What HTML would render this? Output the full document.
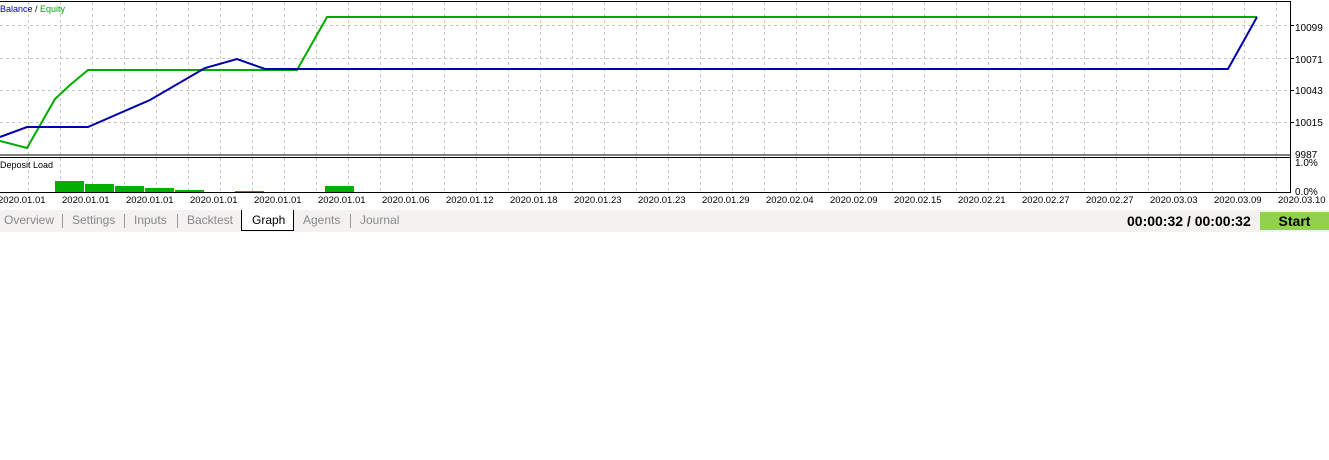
<!DOCTYPE html>
<html><head><style>
body{margin:0;width:1329px;height:460px;background:#fff;position:relative;overflow:hidden;font-family:"Liberation Sans",sans-serif}
.t{position:absolute;font-size:10px;color:#000;white-space:nowrap}
.tabs{position:absolute;left:0;top:210px;width:1329px;height:22px;background:#f4f1f1}
.tab{position:absolute;top:3px;font-size:12px;color:#888}
</style></head><body>
<svg width="1329" height="210" style="position:absolute;left:0;top:0">
<g stroke="#c8c8c8" stroke-dasharray="3,3" stroke-width="1">
<line x1="0" y1="25.5" x2="1290" y2="25.5"/><line x1="0" y1="58.5" x2="1290" y2="58.5"/>
<line x1="0" y1="90.5" x2="1290" y2="90.5"/><line x1="0" y1="122.5" x2="1290" y2="122.5"/>
</g>
<g id="v" stroke="#c8c8c8" stroke-dasharray="3,3" stroke-width="1"></g>
<line x1="0" y1="1.5" x2="1290" y2="1.5" stroke="#000"/>
<line x1="1290.5" y1="1" x2="1290.5" y2="193" stroke="#000"/>
<line x1="0" y1="155" x2="1290" y2="155" stroke="#000"/>
<line x1="0" y1="157.5" x2="1290" y2="157.5" stroke="#000"/>
<line x1="0" y1="192.5" x2="1290" y2="192.5" stroke="#000"/>
<polyline fill="none" stroke="#00aa00" stroke-width="2" points="0,141 27,148 55,99 70,85 88,70 297,70 327,17 1257,17"/>
<polyline fill="none" stroke="#0000aa" stroke-width="2" points="0,137 27,127 88,127 150,100 205,68 237,59 265,69 1228,69 1257,17"/>
<g fill="#00b000">
<rect x="55" y="181" width="29" height="11"/><rect x="85" y="184" width="29" height="8"/>
<rect x="115" y="186" width="29" height="6"/><rect x="145" y="188" width="29" height="4"/>
<rect x="175" y="190" width="29" height="2"/><rect x="235" y="191" width="29" height="1"/>
<rect x="325" y="186" width="29" height="6"/>
</g>
<g stroke="#000"><line x1="1290" y1="25.5" x2="1294" y2="25.5"/><line x1="1290" y1="58.5" x2="1294" y2="58.5"/><line x1="1290" y1="90.5" x2="1294" y2="90.5"/><line x1="1290" y1="122.5" x2="1294" y2="122.5"/></g>
</svg>
<script>
var g=document.getElementById('v'),s='';
for(var x=28;x<1290;x+=32){s+='<line x1="'+(x+.5)+'" y1="2" x2="'+(x+.5)+'" y2="192"/>'}
g.innerHTML=s;
</script>
<div class="t" style="left:0;top:4px;font-size:9px"><span style="color:#0000aa">Balance</span> / <span style="color:#00aa00">Equity</span></div>
<div class="t" style="left:0;top:160px;font-size:9px">Deposit Load</div>
<div class="t" style="left:1295px;top:23px">10099</div>
<div class="t" style="left:1295px;top:55px">10071</div>
<div class="t" style="left:1295px;top:86px">10043</div>
<div class="t" style="left:1295px;top:118px">10015</div>
<div class="t" style="left:1295px;top:150px">9987</div>
<div class="t" style="left:1295px;top:158px">1.0%</div>
<div class="t" style="left:1295px;top:187px">0.0%</div>
<div id="d"></div>
<script>
var L=["2020.01.01","2020.01.01","2020.01.01","2020.01.01","2020.01.01","2020.01.01","2020.01.06","2020.01.12","2020.01.18","2020.01.23","2020.01.23","2020.01.29","2020.02.04","2020.02.09","2020.02.15","2020.02.21","2020.02.27","2020.02.27","2020.03.03","2020.03.09","2020.03.10"],h='';
for(var i=0;i<L.length;i++){h+='<div class="t" style="left:'+(i==0?-2:(-2+i*64))+'px;top:195px;font-size:9.5px">'+L[i]+'</div>'}
document.getElementById('d').innerHTML=h;
</script>
<div class="tabs">
<span class="tab" style="left:4px">Overview</span>
<span class="tab" style="left:72px">Settings</span>
<span class="tab" style="left:134px">Inputs</span>
<span class="tab" style="left:187px">Backtest</span>
<div style="position:absolute;left:241px;top:0;width:51px;height:20px;background:#fff;border:1px solid #000;border-top:none"></div>
<span class="tab" style="left:252px;color:#000">Graph</span>
<span class="tab" style="left:303px">Agents</span>
<span class="tab" style="left:360px">Journal</span>
<span style="position:absolute;left:62px;top:4px;width:1px;height:14px;background:#999"></span>
<span style="position:absolute;left:124px;top:4px;width:1px;height:14px;background:#999"></span>
<span style="position:absolute;left:177px;top:4px;width:1px;height:14px;background:#999"></span>
<span style="position:absolute;left:350px;top:4px;width:1px;height:14px;background:#999"></span>
<span style="position:absolute;left:1127px;top:3px;font-size:14px;font-weight:bold">00:00:32 / 00:00:32</span>
<div style="position:absolute;left:1260px;top:2px;width:69px;height:18px;background:#92d050;text-align:center;font-weight:bold;font-size:14px;line-height:18px">Start</div>
</div>
</body></html>
